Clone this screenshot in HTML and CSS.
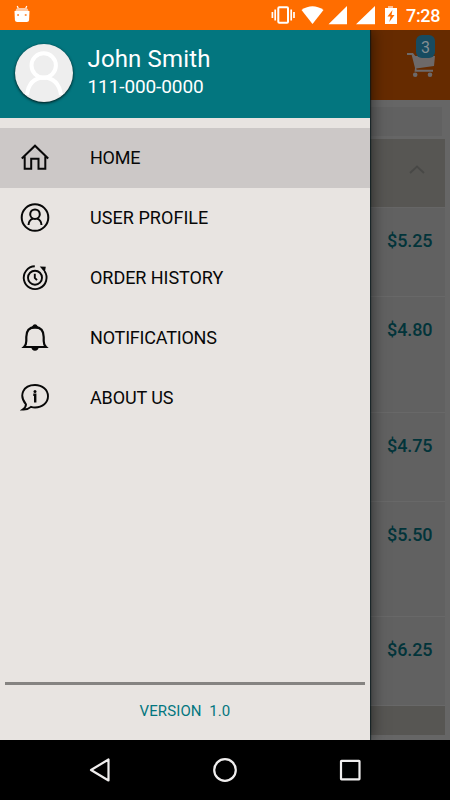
FILE: index.html
```html
<!DOCTYPE html>
<html lang="en">
<head>
<meta charset="utf-8">
<title>Menu</title>
<link rel="stylesheet" href="styles.css">
</head>
<body>
<div class="screen">
  <header class="status">
    <svg class="droid" width="16" height="18" viewBox="0 0 16 18"><path d="M3.200 1l1.400 3M12.800 1l-1.400 3" stroke="#fff" stroke-width="1.200"/><path d="M1.500 6Q2 3 4.500 3h7Q14 3 14.500 6z" fill="#ffc9a3"/><path d="M.5 6h15l-.4 9q-.2 2-2.200 2H3.100Q1.100 17 .9 15z" fill="#fff"/><path d="M3.200 9h1.800v2H3.200zM10.800 9h1.800v2h-1.800z" fill="#ff9950"/></svg>
    <svg class="signals" width="126" height="20" viewBox="271 5 126 20" fill="#fff">
      <rect x="278.300" y="7.300" width="9.700" height="15.400" rx="1" fill="none" stroke="#fff" stroke-width="2"/>
      <path d="M275.200 9.500v11M291.200 9.500v11M272.400 12v6M294 12v6" stroke="#fff" stroke-width="1.700"/>
      <path d="M301.500 10Q312.500 2.500 323.500 10L312.500 24z"/>
      <path d="M347 6v18.300h-18.500zM375 6v18.300h-19z"/>
      <path d="M388 6h5v2h-5z" fill="#ffc096"/><path d="M385 8h12v16h-12z"/>
      <path d="M392.500 10l-5 6.500h3l-1.200 5.500 5.200-7h-3z" fill="#ff6d00"/>
    </svg>
    <span class="clock">7:28</span>
  </header>

  <main class="stage">
    <aside class="drawer">
      <div class="account">
        <svg class="avatar" width="58" height="58" viewBox="0 0 58 58" fill="none" stroke="#fff" stroke-width="4"><circle cx="28.700" cy="21.500" r="12.200"/><path d="M12 51Q14 34 28.700 33.500Q43.500 34 46 51"/></svg>
        <div class="who"><div class="name">John Smith</div><div class="phone">111-000-0000</div></div>
      </div>
      <nav class="menu">
        <a class="item active">
          <svg class="icon" viewBox="0 0 30 30"><path d="M1.800 15.500L15 2.700l13.200 12.800M4.700 13.500v12.200h6.500V15.800h7.300v9.900h6.800V13.500"/></svg>
          <span class="label home">HOME</span></a>
        <a class="item">
          <svg class="icon" viewBox="0 0 30 30"><circle cx="15" cy="14.500" r="13.300"/><circle cx="15" cy="11.200" r="4.800"/><path d="M8.500 22Q8.700 17 13 15.600M21.500 22Q21.300 17 17 15.600"/></svg>
          <span class="label profile">USER PROFILE</span></a>
        <a class="item">
          <svg class="icon thin" viewBox="0 0 30 30"><path d="M14.800 3.300A11.400 11.400 0 1 0 24.600 8.300"/><circle cx="15" cy="14.700" r="7"/><path d="M14.800 10.800v4l2.200 2.300"/><path class="solid" d="M19.800 3.500l6 .3-1 5.800z"/></svg>
          <span class="label history">ORDER HISTORY</span></a>
        <a class="item">
          <svg class="icon bell" viewBox="0 0 30 30"><path d="M4 24q2.300-2.300 2.300-6v-4Q6.300 4.600 15 4.200q8.700.4 8.700 9.800v4q0 3.700 2.300 6z"/><path class="solid" d="M8.500 6.500Q12 4 12.500 3q.7-1.700 2.500-1.700T17.500 3q.5 1 4 3.500-6.500-2-13 0zM11.300 24h7.400q-.4 3.800-3.700 3.800T11.300 24z"/></svg>
          <span class="label notes">NOTIFICATIONS</span></a>
        <a class="item">
          <svg class="icon thin" viewBox="0 0 30 30"><path d="M6 21.300C-1.500 12.500 3 2 15 2c7.500 0 13 5 13 11.300S22.500 24.500 15 24.500q-2 0-4-.6-3.300 3-8.300 2.700Q6 24.300 6 21.300z"/><path class="stem" d="M13.300 11.800h1.900v7.700"/><circle class="solid" cx="15" cy="8.500" r="1.500"/></svg>
          <span class="label about">ABOUT US</span></a>
      </nav>
      <footer class="version">VERSION&nbsp; 1.0</footer>
    </aside>

    <section class="page">
      <div class="appbar">
        <svg width="28" height="25" viewBox="0 0 28 25" fill="#6d6969"><path d="M0 0h6l2.300 3H28l-1 10-17.800 2.500.5 1.300H26v2H7.500L8 15 4.700 2H0z"/><circle cx="8.200" cy="21.700" r="2.300"/><circle cx="23" cy="21.700" r="2.300"/></svg>
        <span class="badge">3</span>
      </div>
      <div class="list">
        <div class="search"></div>
        <div class="group"><svg width="16" height="9" viewBox="0 0 16 9"><path d="M1 8l7-6.500L15 8" fill="none" stroke="#484846" stroke-width="1.800"/></svg></div>
        <div class="row short">$5.25</div>
        <div class="row tall">$4.80</div>
        <div class="row short">$4.75</div>
        <div class="row tall">$5.50</div>
        <div class="row short">$6.25</div>
        <div class="group last"></div>
      </div>
    </section>
  </main>

  <footer class="navbar">
    <svg width="22" height="26" viewBox="0 0 22 26"><path d="M19.500 2.500v21L2 13z"/></svg>
    <svg width="26" height="26" viewBox="0 0 26 26"><circle cx="13" cy="13" r="10.800"/></svg>
    <svg width="22" height="26" viewBox="0 0 22 26"><rect x="2" y="3.800" width="18.500" height="18.500" rx=".5"/></svg>
  </footer>
</div>
</body>
</html>
```
FILE: styles.css
```css
* { box-sizing: border-box; }
body { margin: 0; font-family: Roboto, "Noto Sans", sans-serif; background: #000; }
svg { display: block; flex: none; }
.screen { width: 450px; height: 800px; display: flex; flex-direction: column; overflow: hidden; }

.status { height: 30px; background: #ff6d00; display: flex; align-items: center; padding-left: 14px; }
.droid { margin-top: -2px; }
.signals { margin-left: 241px; }
.clock { margin-left: 9px; color: #fff; font-size: 18px; font-weight: 500; line-height: 30px; padding-top: 1px; letter-spacing: -.35px; }

.stage { height: 710px; display: flex; }
.drawer { width: 370px; background: #e8e4e1; display: flex; flex-direction: column; position: relative; z-index: 1; box-shadow: 1px 0 1px rgba(0,20,25,.6), 2px 0 14px rgba(0,0,0,.5); clip-path: inset(0 -30px 0 0); }
.account { height: 87.500px; background: #03767f; display: flex; align-items: center; padding: 0 0 2px 15px; color: #fff; }
.avatar { border-radius: 50%; background: #eee; box-shadow: 0 1px 3px rgba(0,0,0,.85); }
.who { margin: -2px 0 0 14.500px; }
.name { font-size: 24px; line-height: 30px; letter-spacing: .15px; }
.phone { font-size: 19px; line-height: 26px; letter-spacing: -.1px; }
.menu { margin-top: 10px; }
.item { height: 60px; display: flex; align-items: center; padding-left: 20px; }
.active { background: #ccc8c7; }
.icon { width: 30px; height: 30px; fill: none; stroke: #080808; stroke-width: 2; }
.thin { stroke-width: 1.900; }
.bell { stroke-width: 2.200; }
.solid { fill: #080808; stroke: none; }
.stem { stroke-width: 2.400; }
.label { margin-left: 40px; font-size: 18px; line-height: 24px; padding-top: 1px; color: #080808; }
.home { letter-spacing: -.25px; }
.profile { letter-spacing: .05px; }
.history { letter-spacing: -.05px; }
.notes { letter-spacing: -.2px; }
.about { letter-spacing: -.12px; }
.version { margin: auto 5px 0; height: 58px; border-top: 3px solid #858381; text-align: center; font-size: 15px; line-height: 52px; letter-spacing: .1px; color: #03767f; }

.page { width: 80px; background: #666; display: flex; flex-direction: column; }
.appbar { height: 70px; background: #662b00; position: relative; padding: 23px 0 0 37px; }
.badge { position: absolute; left: 46px; top: 5px; width: 19px; height: 23px; border-radius: 6px; background: #174b60; color: #858e93; font-size: 16px; line-height: 25px; text-align: center; }
.list { width: 75px; padding-top: 7px; }
.search { width: 72px; height: 29px; margin-bottom: 3px; background: #616161; }
.group { height: 68px; background: #575653; display: flex; justify-content: flex-end; padding: 26px 20px 0 0; margin-bottom: 1px; }
.last { height: 29px; margin: 0; }
.row { background: #616161; border-bottom: 1px solid #686868; color: #02343a; font-size: 18px; font-weight: 500; line-height: 24px; padding: 21px 12.500px 0 0; text-align: right; letter-spacing: -.1px; }
.short { height: 89px; }
.tall { height: 115.500px; }

.navbar { height: 60px; background: #000; display: flex; align-items: center; padding-left: 89px; gap: 101px; }
.navbar svg { fill: none; stroke: #f0eeee; stroke-width: 2.200; stroke-linejoin: round; }
```
